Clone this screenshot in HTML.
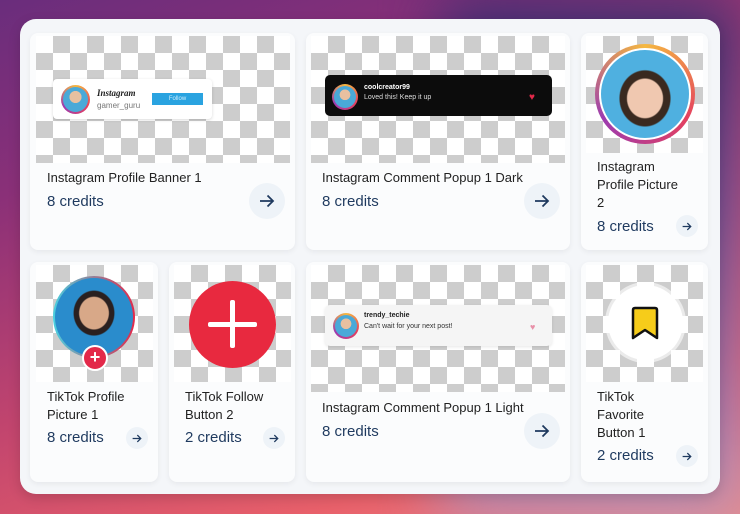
<!DOCTYPE html>
<html><head><style>
*{margin:0;padding:0;box-sizing:border-box}
body{width:740px;height:514px;overflow:hidden;position:relative;font-family:"Liberation Sans",sans-serif;
background:linear-gradient(160deg,#6a2d7c 0%,#8a3078 25%,#c2456e 55%,#e8606a 80%,#e88a8a 100%);}
.bgr{position:absolute;right:0;top:0;width:300px;height:514px;background:linear-gradient(180deg,#2a2a6a 0%,#4b4f9e 40%,#8a7cc0 80%,#b49ec8 100%);opacity:.85;filter:blur(30px)}
.panel{position:absolute;left:20px;top:19px;width:700px;height:475px;border-radius:16px;background:#f4f6f9;box-shadow:0 4px 12px rgba(0,0,0,.15)}
.card{position:absolute;background:#fbfcfd;border-radius:8px;box-shadow:0 2px 6px rgba(0,0,0,.06)}
.chk{position:absolute;background:repeating-conic-gradient(#cdcdcd 0 25%,#fff 0 50%) 0 0/34px 34px}
.t{position:absolute;font-size:13px;color:#222;line-height:18px}
.c{position:absolute;font-size:15px;color:#1f3a5f}
.arr{position:absolute;border-radius:50%;background:#eef3f8;display:flex;align-items:center;justify-content:center;color:#1f3a5f}
.av{position:absolute;border-radius:50%;background:conic-gradient(#f5b840,#e4405f,#9c3bb0,#f5b840);}
.av i{position:absolute;inset:2px;border-radius:50%;background:radial-gradient(circle at 50% 40%,#e8c0a0 0 30%,#4aa9d8 32%)}
</style></head><body>
<div class="bgr"></div>
<div class="panel"></div>

<!-- card1 -->
<div class="card" style="left:30px;top:33px;width:265px;height:217px"></div>
<div class="chk" style="left:36px;top:36px;width:254px;height:127px"></div>
<div style="position:absolute;left:53px;top:79px;width:159px;height:40px;background:#fff;border-radius:4px;box-shadow:0 1px 3px rgba(0,0,0,.15)"></div>
<div class="av" style="left:61px;top:85px;width:29px;height:29px"><i></i></div>
<div style="position:absolute;left:97px;top:88px;font-family:'Liberation Serif',serif;font-style:italic;font-weight:bold;font-size:9px;color:#222">Instagram</div>
<div style="position:absolute;left:97px;top:101px;font-size:8px;color:#777">gamer_guru</div>
<div style="position:absolute;left:152px;top:93px;width:51px;height:12px;background:#2aa3e0;color:#cfeefc;font-size:6px;text-align:center;line-height:12px">Follow</div>
<div class="t" style="left:47px;top:169px">Instagram Profile Banner 1</div>
<div class="c" style="left:47px;top:193px">8 credits</div>
<div class="arr" style="left:249px;top:183px;width:36px;height:36px"><svg width="16" height="14" viewBox="0 0 16 14"><path d="M1 7H14M8.5 1.5L14 7L8.5 12.5" stroke="#1f3a5f" stroke-width="1.8" fill="none"/></svg></div>

<!-- card2 -->
<div class="card" style="left:306px;top:33px;width:264px;height:217px"></div>
<div class="chk" style="left:311px;top:36px;width:254px;height:127px"></div>
<div style="position:absolute;left:325px;top:75px;width:227px;height:41px;background:#0c0c0c;border-radius:5px"></div>
<div class="av" style="left:332px;top:84px;width:26px;height:26px"><i></i></div>
<div style="position:absolute;left:364px;top:84px;font-size:7px;font-weight:bold;color:#fff">coolcreator99</div>
<div style="position:absolute;left:364px;top:94px;font-size:7px;color:#ddd">Loved this! Keep it up</div>
<div style="position:absolute;left:529px;top:92px;color:#e3294a;font-size:10px">♥</div>
<div class="t" style="left:322px;top:169px">Instagram Comment Popup 1 Dark</div>
<div class="c" style="left:322px;top:193px">8 credits</div>
<div class="arr" style="left:524px;top:183px;width:36px;height:36px"><svg width="16" height="14" viewBox="0 0 16 14"><path d="M1 7H14M8.5 1.5L14 7L8.5 12.5" stroke="#1f3a5f" stroke-width="1.8" fill="none"/></svg></div>

<!-- card3 -->
<div class="card" style="left:581px;top:33px;width:127px;height:217px"></div>
<div class="chk" style="left:586px;top:36px;width:117px;height:117px"></div>
<div class="av" style="left:595px;top:44px;width:100px;height:100px"><i style="inset:4px;border:2px solid #fff;background:radial-gradient(ellipse at 50% 55%,#f0c8b0 0 28%,#3a2a20 30% 40%,#4fb0e0 42%)"></i></div>
<div class="t" style="left:597px;top:158px">Instagram<br>Profile Picture<br>2</div>
<div class="c" style="left:597px;top:218px">8 credits</div>
<div class="arr" style="left:676px;top:215px;width:22px;height:22px"><svg width="10" height="9" viewBox="0 0 16 14"><path d="M1 7H14M8.5 1.5L14 7L8.5 12.5" stroke="#1f3a5f" stroke-width="2" fill="none"/></svg></div>

<!-- card4 -->
<div class="card" style="left:30px;top:262px;width:128px;height:220px"></div>
<div class="chk" style="left:36px;top:265px;width:117px;height:117px"></div>
<div style="position:absolute;left:53px;top:276px;width:82px;height:82px;border-radius:50%;background:linear-gradient(90deg,#4ad0e0,#e3294a)"><i style="position:absolute;inset:2px;border-radius:50%;background:radial-gradient(ellipse at 50% 45%,#d8a888 0 26%,#2a2020 28% 36%,#2a8ccc 38%)"></i></div>
<div style="position:absolute;left:82px;top:345px;width:26px;height:26px;border-radius:50%;background:#e3294a;border:2px solid #fff;color:#fff;font-size:18px;line-height:21px;text-align:center;font-weight:bold">+</div>
<div class="t" style="left:47px;top:388px">TikTok Profile<br>Picture 1</div>
<div class="c" style="left:47px;top:429px">8 credits</div>
<div class="arr" style="left:126px;top:427px;width:22px;height:22px"><svg width="10" height="9" viewBox="0 0 16 14"><path d="M1 7H14M8.5 1.5L14 7L8.5 12.5" stroke="#1f3a5f" stroke-width="2" fill="none"/></svg></div>

<!-- card5 -->
<div class="card" style="left:169px;top:262px;width:126px;height:220px"></div>
<div class="chk" style="left:174px;top:265px;width:117px;height:117px"></div>
<div style="position:absolute;left:189px;top:281px;width:87px;height:87px;border-radius:50%;background:#e8293f"></div>
<div style="position:absolute;left:230px;top:300px;width:5px;height:48px;background:#fff;border-radius:2px"></div>
<div style="position:absolute;left:208px;top:322px;width:49px;height:5px;background:#fff;border-radius:2px"></div>
<div class="t" style="left:185px;top:388px">TikTok Follow<br>Button 2</div>
<div class="c" style="left:185px;top:429px">2 credits</div>
<div class="arr" style="left:263px;top:427px;width:22px;height:22px"><svg width="10" height="9" viewBox="0 0 16 14"><path d="M1 7H14M8.5 1.5L14 7L8.5 12.5" stroke="#1f3a5f" stroke-width="2" fill="none"/></svg></div>

<!-- card6 -->
<div class="card" style="left:306px;top:262px;width:264px;height:220px"></div>
<div class="chk" style="left:311px;top:265px;width:254px;height:127px"></div>
<div style="position:absolute;left:325px;top:305px;width:227px;height:41px;background:#f5f5f5;border-radius:5px;box-shadow:0 1px 3px rgba(0,0,0,.1)"></div>
<div class="av" style="left:333px;top:313px;width:26px;height:26px"><i></i></div>
<div style="position:absolute;left:364px;top:312px;font-size:7px;font-weight:bold;color:#222">trendy_techie</div>
<div style="position:absolute;left:364px;top:323px;font-size:7px;color:#333">Can't wait for your next post!</div>
<div style="position:absolute;left:530px;top:322px;color:#e890a8;font-size:9px">♥</div>
<div class="t" style="left:322px;top:399px">Instagram Comment Popup 1 Light</div>
<div class="c" style="left:322px;top:423px">8 credits</div>
<div class="arr" style="left:524px;top:413px;width:36px;height:36px"><svg width="16" height="14" viewBox="0 0 16 14"><path d="M1 7H14M8.5 1.5L14 7L8.5 12.5" stroke="#1f3a5f" stroke-width="1.8" fill="none"/></svg></div>

<!-- card7 -->
<div class="card" style="left:581px;top:262px;width:127px;height:220px"></div>
<div class="chk" style="left:586px;top:265px;width:117px;height:117px"></div>
<div style="position:absolute;left:608px;top:285px;width:75px;height:75px;border-radius:50%;background:#fff;box-shadow:0 0 0 3px rgba(255,255,255,.6)"></div>
<svg style="position:absolute;left:630px;top:306px" width="30" height="36" viewBox="0 0 30 36"><path d="M3 4Q3 2 5 2H25Q27 2 27 4V32L15 24L3 32Z" fill="#f6cc1a" stroke="#111" stroke-width="2.5" stroke-linejoin="round"/></svg>
<div class="t" style="left:597px;top:388px">TikTok<br>Favorite<br>Button 1</div>
<div class="c" style="left:597px;top:447px">2 credits</div>
<div class="arr" style="left:676px;top:445px;width:22px;height:22px"><svg width="10" height="9" viewBox="0 0 16 14"><path d="M1 7H14M8.5 1.5L14 7L8.5 12.5" stroke="#1f3a5f" stroke-width="2" fill="none"/></svg></div>
</body></html>
